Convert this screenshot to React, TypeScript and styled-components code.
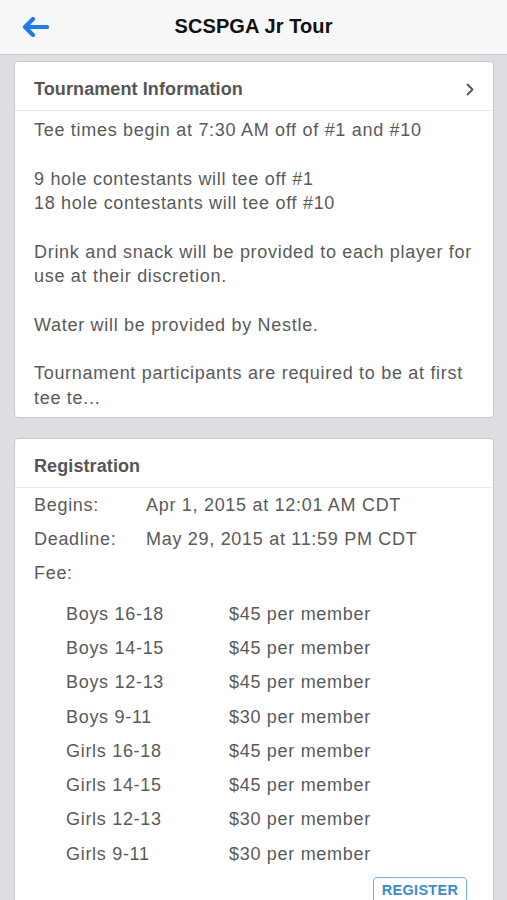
import React from "react";
import styled, { createGlobalStyle } from "styled-components";

const Global = createGlobalStyle`
  html, body { margin: 0; padding: 0; background: #dcdee2; }
  body { font-family: "Liberation Sans", Arial, sans-serif; -webkit-font-smoothing: antialiased; }
  * { box-sizing: border-box; }
`;

const Page = styled.div`
  width: 507px;
  min-height: 900px;
  background: #dcdee2;
  overflow: hidden;
`;

const NavBar = styled.header`
  height: 55px;
  background: #f7f7f7;
  border-bottom: 1px solid #c9cacc;
  display: grid;
  grid-template-columns: 60px 1fr 60px;
  align-items: center;
`;

const BackButton = styled.button`
  border: none;
  background: none;
  padding: 0 0 0 22px;
  height: 100%;
  display: flex;
  align-items: center;
  cursor: pointer;
`;

const Title = styled.h1`
  margin: 0;
  text-align: center;
  font-size: 20px;
  font-weight: bold;
  color: #111;
  letter-spacing: 0.1px;
  padding-bottom: 2px;
`;

const Content = styled.main`
  padding: 6px 13px 0 14px;
  display: flex;
  flex-direction: column;
  gap: 20px;
`;

const Card = styled.section`
  background: #fff;
  border: 1px solid #c6c8cc;
  border-radius: 4px;
  overflow: hidden;
`;

const CardHeader = styled.div`
  height: 49px;
  padding: 7px 19px 0 19px;
  display: flex;
  align-items: center;
  justify-content: space-between;
  border-bottom: 1px solid #ebebeb;
`;

const CardTitle = styled.h2`
  margin: 0;
  font-size: 18px;
  font-weight: bold;
  color: #555;
  letter-spacing: 0.1px;
`;

const CardBody = styled.div`
  padding: 7px 19px 7px 19px;
  font-size: 18px;
  line-height: 24.35px;
  letter-spacing: 0.7px;
  color: #5a5a5a;
  white-space: pre-line;
`;

const InfoRow = styled.div`
  display: grid;
  grid-template-columns: 112px 1fr;
  height: 34px;
  align-items: center;
  padding-left: 19px;
  font-size: 18px;
  letter-spacing: 0.7px;
  color: #5a5a5a;
`;

const FeeList = styled.div`
  padding-top: 7px;
`;

const FeeRow = styled.div`
  display: grid;
  grid-template-columns: 163px 1fr;
  height: 34.28px;
  align-items: center;
  padding-left: 51px;
  font-size: 18px;
  letter-spacing: 0.7px;
  color: #5a5a5a;
`;

const Actions = styled.div`
  display: flex;
  justify-content: flex-end;
  padding: 6px 26px 12px 0;
`;

const RegisterButton = styled.button`
  width: 94px;
  height: 26px;
  border: 1.5px solid #72ade3;
  border-radius: 4px;
  background: #fff;
  color: #3a8bd6;
  font-family: "Liberation Sans", Arial, sans-serif;
  font-weight: bold;
  font-size: 14.5px;
  letter-spacing: 0.3px;
  padding: 0;
`;

const info = `Tee times begin at 7:30 AM off of #1 and #10

9 hole contestants will tee off #1
18 hole contestants will tee off #10

Drink and snack will be provided to each player for use at their discretion.

Water will be provided by Nestle.

Tournament participants are required to be at first tee te...`;

const fees: [string, string][] = [
  ["Boys 16-18", "$45 per member"],
  ["Boys 14-15", "$45 per member"],
  ["Boys 12-13", "$45 per member"],
  ["Boys 9-11", "$30 per member"],
  ["Girls 16-18", "$45 per member"],
  ["Girls 14-15", "$45 per member"],
  ["Girls 12-13", "$30 per member"],
  ["Girls 9-11", "$30 per member"],
];

export default function App() {
  return (
    <Page>
      <Global />
      <NavBar>
        <BackButton aria-label="Back">
          <svg width="27" height="20" viewBox="0 0 27 20">
            <path
              d="M11 2 L3 10 L11 18 M3.5 10 H25"
              fill="none"
              stroke="#1b7bf0"
              strokeWidth="4.2"
              strokeLinecap="round"
              strokeLinejoin="round"
            />
          </svg>
        </BackButton>
        <Title>SCSPGA Jr Tour</Title>
        <div />
      </NavBar>
      <Content>
        <Card>
          <CardHeader>
            <CardTitle>Tournament Information</CardTitle>
            <svg width="8" height="13" viewBox="0 0 8 13">
              <path d="M1.5 1.5 L6.5 6.5 L1.5 11.5" fill="none" stroke="#555" strokeWidth="1.8" strokeLinecap="round" strokeLinejoin="round" />
            </svg>
          </CardHeader>
          <CardBody>{info}</CardBody>
        </Card>
        <Card>
          <CardHeader>
            <CardTitle>Registration</CardTitle>
          </CardHeader>
          <InfoRow>
            <span>Begins:</span>
            <span>Apr 1, 2015 at 12:01 AM CDT</span>
          </InfoRow>
          <InfoRow>
            <span>Deadline:</span>
            <span>May 29, 2015 at 11:59 PM CDT</span>
          </InfoRow>
          <InfoRow>
            <span>Fee:</span>
            <span />
          </InfoRow>
          <FeeList>
            {fees.map(([k, v]) => (
              <FeeRow key={k}>
                <span>{k}</span>
                <span>{v}</span>
              </FeeRow>
            ))}
          </FeeList>
          <Actions>
            <RegisterButton>REGISTER</RegisterButton>
          </Actions>
        </Card>
      </Content>
    </Page>
  );
}
